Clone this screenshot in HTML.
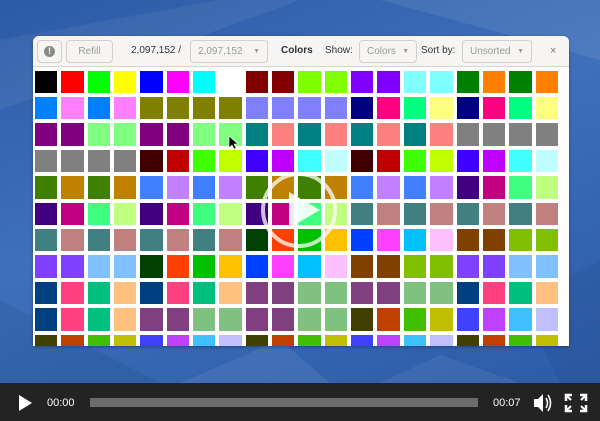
<!DOCTYPE html>
<html><head><style>
*{margin:0;padding:0;box-sizing:border-box}
body{width:600px;height:421px;overflow:hidden;position:relative;font-family:"Liberation Sans",sans-serif;background:#3a6ab4}
#bg{position:absolute;left:0;top:0;width:600px;height:383px;background:linear-gradient(160deg,#2c5aa6 0%,#3f70bb 45%,#3566b2 70%,#2d5ca8 100%);overflow:hidden}
#win{position:absolute;left:33px;top:36px;width:536px;height:310px;background:#fff;border-radius:6px 6px 0 0;overflow:hidden;box-shadow:0 1px 3px rgba(0,0,0,.3)}
#hdr{position:absolute;left:0;top:0;width:536px;height:31px;background:#f6f5f4;border-bottom:1px solid #d8d4d0;font-size:10px;color:#2e3436}
.b{position:absolute;top:4px;height:23px;border:1px solid #d3cfcb;border-radius:4px;background:#f6f5f4;color:#9a9a98;line-height:21px;font-size:10px}
.t{position:absolute;top:9px;line-height:12px}
#grid{position:absolute;left:2px;top:34.7px;display:grid;grid-template-columns:repeat(20,22.35px);grid-auto-rows:22.4px;gap:4px}
#grid div{width:22.35px;height:22.4px}
#bar{position:absolute;left:0;top:383px;width:600px;height:38px;background:#232323;color:#fff;font-size:11px}
</style></head><body>
<div id="bg">
<svg width="600" height="383" style="position:absolute;left:0;top:0">
<polygon points="0,40 220,0 300,0 0,110" fill="#fff" opacity=".06"/>
<polygon points="380,0 600,0 600,60" fill="#fff" opacity=".08"/>
<polygon points="0,300 160,383 0,383" fill="#000" opacity=".06"/>
<polygon points="180,383 280,340 330,383" fill="#fff" opacity=".07"/>
<polygon points="380,383 440,355 520,383" fill="#fff" opacity=".06"/>
<polygon points="520,300 600,260 600,383 560,383" fill="#000" opacity=".05"/>
</svg>
</div>
<div id="win">
<div id="hdr">
<div class="b" style="left:4px;width:25px;text-align:center"><span style="display:inline-block;width:11px;height:11px;border-radius:50%;background:#8a8a88;color:#f6f5f4;font-weight:bold;font-size:9px;line-height:11px;vertical-align:middle">!</span></div>
<div class="b" style="left:33px;width:47px;text-align:center">Refill</div>
<div class="t" style="left:98px">2,097,152 /</div>
<div class="b" style="left:157px;width:78px;padding-left:7px">2,097,152 <span style="position:absolute;right:7px;font-size:7px">▼</span></div>
<div class="t" style="left:248px;font-weight:bold">Colors</div>
<div class="t" style="left:292px">Show:</div>
<div class="b" style="left:326px;width:58px;padding-left:7px">Colors <span style="position:absolute;right:7px;font-size:7px">▼</span></div>
<div class="t" style="left:388px">Sort by:</div>
<div class="b" style="left:429px;width:70px;padding-left:7px">Unsorted <span style="position:absolute;right:7px;font-size:7px">▼</span></div>
<div class="t" style="left:517px;color:#777;font-size:11px">×</div>
</div>
<div id="grid"></div>
</div>
<svg width="600" height="383" style="position:absolute;left:0;top:0">
<circle cx="299" cy="210" r="36" fill="none" stroke="#fff" stroke-opacity=".75" stroke-width="4"/>
<polygon points="289,192 289,228 320,210" fill="#fff" opacity=".9"/>
<path d="M229,136 L229,148 L232,145 L234,149 L236,148 L234,144 L238,144 Z" fill="#000" stroke="#fff" stroke-width=".6"/>
</svg>
<div id="bar">
<svg width="600" height="38" style="position:absolute;left:0;top:0">
<polygon points="19,12 19,28 32,20" fill="#fff"/>
<rect x="90" y="15" width="388" height="9" fill="#6b6b6b"/>
<polygon points="534,16 538,16 543,11 543,29 538,24 534,24" fill="#fff"/>
<path d="M546,15 Q549,20 546,25 M548,12 Q553,20 548,28" stroke="#fff" stroke-width="1.6" fill="none"/>
<path d="M566,18 V12 H572 M580,12 H586 V18 M586,22 V28 H580 M572,28 H566 V22" stroke="#fff" stroke-width="2.5" fill="none"/>
<path d="M567,13 L571,17 M585,13 L581,17 M585,27 L581,23 M567,27 L571,23" stroke="#fff" stroke-width="2"/>
</svg>
<div style="position:absolute;left:47px;top:14px">00:00</div>
<div style="position:absolute;left:493px;top:14px">00:07</div>
</div>
<script>
var R=[
"000000 ff0000 00ff00 ffff00 0000ff ff00ff 00ffff ffffff 800000 800000 80ff00 80ff00 8000ff 8000ff 80ffff 80ffff 008000 ff8000 008000 ff8000",
"0080ff ff80ff 0080ff ff80ff 808000 808000 808000 808000 8080ff 8080ff 8080ff 8080ff 000080 ff0080 00ff80 ffff80 000080 ff0080 00ff80 ffff80",
"800080 800080 80ff80 80ff80 800080 800080 80ff80 80ff80 008080 ff8080 008080 ff8080 008080 ff8080 008080 ff8080 808080 808080 808080 808080",
"808080 808080 808080 808080 400000 c00000 40ff00 c0ff00 4000ff c000ff 40ffff c0ffff 400000 c00000 40ff00 c0ff00 4000ff c000ff 40ffff c0ffff",
"408000 c08000 408000 c08000 4080ff c080ff 4080ff c080ff 408000 c08000 408000 c08000 4080ff c080ff 4080ff c080ff 400080 c00080 40ff80 c0ff80",
"400080 c00080 40ff80 c0ff80 400080 c00080 40ff80 c0ff80 400080 c00080 40ff80 c0ff80 408080 c08080 408080 c08080 408080 c08080 408080 c08080",
"408080 c08080 408080 c08080 408080 c08080 408080 c08080 004000 ff4000 00c000 ffc000 0040ff ff40ff 00c0ff ffc0ff 804000 804000 80c000 80c000",
"8040ff 8040ff 80c0ff 80c0ff 004000 ff4000 00c000 ffc000 0040ff ff40ff 00c0ff ffc0ff 804000 804000 80c000 80c000 8040ff 8040ff 80c0ff 80c0ff",
"004080 ff4080 00c080 ffc080 004080 ff4080 00c080 ffc080 804080 804080 80c080 80c080 804080 804080 80c080 80c080 004080 ff4080 00c080 ffc080",
"004080 ff4080 00c080 ffc080 804080 804080 80c080 80c080 804080 804080 80c080 80c080 404000 c04000 40c000 c0c000 4040ff c040ff 40c0ff c0c0ff",
"404000 c04000 40c000 c0c000 4040ff c040ff 40c0ff c0c0ff 404000 c04000 40c000 c0c000 4040ff c040ff 40c0ff c0c0ff 404000 c04000 40c000 c0c000"];
var h="";R.forEach(function(r){r.split(" ").forEach(function(c){h+='<div style="background:#'+c+'"></div>'})});
document.getElementById("grid").innerHTML=h;
</script>
</body></html>
